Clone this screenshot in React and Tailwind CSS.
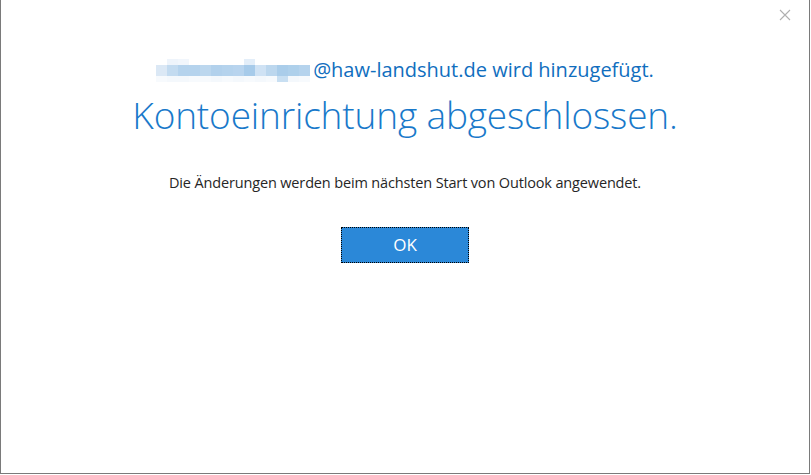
const top = ['#ffffff', '#eef4fb', '#f1f6fc', '#ffffff', '#ffffff', '#ffffff', '#ffffff', '#ffffff', '#e3eef9', '#ffffff', '#ffffff', '#ffffff', '#ffffff', '#ffffff']
const mid = ['#dbe8f5', '#c3dbf0', '#b5d3ed', '#b5d3ed', '#bcd7ee', '#b2d1ec', '#b5d3ed', '#b8d4ee', '#a7cbea', '#cfe2f4', '#bcd7ee', '#aacdea', '#aed0eb', '#b5d3ed']
const bot = ['#f7fafd', '#f4f8fc', '#f4f8fc', '#f7fafd', '#f7fafd', '#f4f8fc', '#f7fafd', '#f4f8fc', '#f7fafd', '#f4f8fc', '#f7fafd', '#c8dff2', '#f4f8fc', '#f7fafd']

function BlurredName() {
  return (
    <span className="inline-flex flex-col mr-[3px]">
      {[top, mid, bot].map((row, r) => (
        <span key={r} className={`flex ${r === 1 ? 'h-[11px]' : 'h-[6px]'}`}>
          {row.map((c, i) => (
            <span key={i} className="w-[11px]" style={{ background: c }} />
          ))}
        </span>
      ))}
    </span>
  )
}

export default function App() {
  return (
    <div className="w-[810px] h-[474px] bg-white border-l border-r border-b border-[#7a7a7a] relative font-['Open_Sans',sans-serif]">
      <button className="absolute right-[18px] top-[9px] text-[#b0b0b0]">
        <svg width="12" height="12" viewBox="0 0 12 12">
          <path d="M1 1L11 11M11 1L1 11" stroke="currentColor" strokeWidth="1.1" />
        </svg>
      </button>
      <div className="flex flex-col items-center pt-[58px]">
        <div className="flex items-center text-[20px] leading-[24px] text-[#106ebe]">
          <BlurredName />
          <span>@haw-landshut.de wird hinzugefügt.</span>
        </div>
        <h1 className="mt-[10px] text-[37px] leading-[46px] font-light text-[#1979ca] tracking-[-0.15px]">
          Kontoeinrichtung abgeschlossen.
        </h1>
        <p className="mt-[35px] text-[14.5px] leading-[20px] text-[#262626] tracking-[-0.15px]">
          Die Änderungen werden beim nächsten Start von Outlook angewendet.
        </p>
        <button className="mt-[34px] w-[128px] h-[36px] bg-[#2b88d8] text-white text-[17px] border border-dotted border-black outline-none">
          OK
        </button>
      </div>
    </div>
  )
}
